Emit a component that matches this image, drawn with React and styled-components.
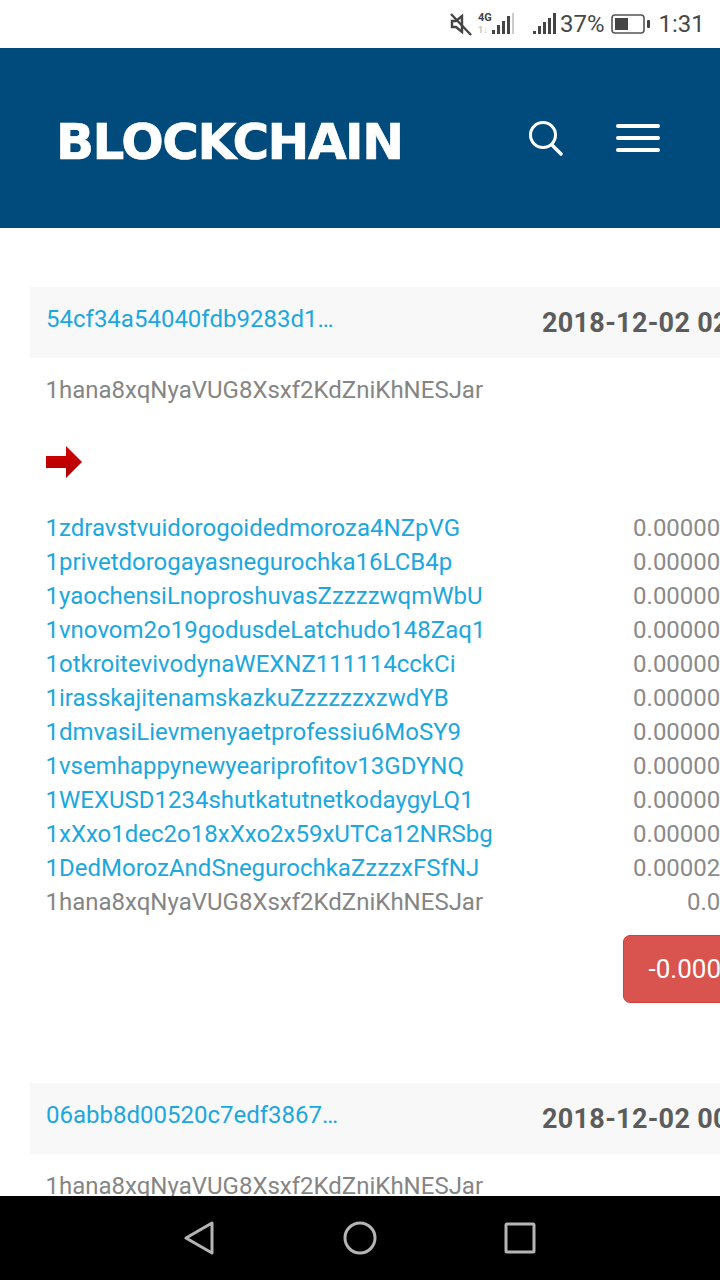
import React from "react";
import styled, { createGlobalStyle } from "styled-components";

const Global = createGlobalStyle`
  html, body { margin: 0; padding: 0; background: #fff; }
  * { box-sizing: border-box; }
`;

const Screen = styled.div`
  width: 720px; height: 1280px; display: flex; flex-direction: column; overflow: hidden;
  font-family: Roboto, "Liberation Sans", sans-serif; background: #fff;
`;
const StatusBar = styled.div`
  height: 48px; flex: none; display: flex; align-items: center;
  padding-left: 449px; color: #484848; font-size: 24px; background: #fff;
`;
const StatusText = styled.span`
  margin-left: ${p => p.$ml || 0}px; line-height: 46px;
`;
const StatusIcon = styled.svg`
  flex: none; margin-left: ${p => p.$ml || 0}px;
`;
const Header = styled.header`
  height: 180px; flex: none; background: #004a7c; display: flex; align-items: center;
  padding: 0 60px 0 56px;
`;
const Logo = styled.div`
  flex: 1; color: #fff; font-family: "DejaVu Sans", sans-serif; font-weight: 700; font-size: 50px;
  letter-spacing: -1.5px; line-height: 1; padding-top: 7px;
  -webkit-text-stroke: 0.7px #fff;
`;
const HeaderIcons = styled.div`
  display: flex; align-items: center; gap: 52px;
`;
const Main = styled.main`
  flex: 1; min-height: 0; overflow: hidden; padding: 59px 0 0 30px;
`;
const Tx = styled.section`
  width: 900px; margin-bottom: 80px;
`;
const TxHead = styled.div`
  height: 71px; background: #f8f8f8; display: flex; padding-left: 16px;
`;
const Hash = styled.a`
  width: 496px; color: #1ba7df; font-size: 24px; line-height: 64px; white-space: nowrap;
`;
const TxDate = styled.div`
  color: #5c5c5c; font-weight: 700; font-size: 27px; line-height: 72px; white-space: nowrap;
  font-family: Roboto, sans-serif; letter-spacing: 0.3px;
`;
const Sender = styled.div`
  font-size: 24px; line-height: 34px; padding: 15px 0 0 15.5px; color: #858585;
`;
const Arrow = styled.svg`
  display: block; margin: 39px 0 33px 16px;
`;
const Outputs = styled.div`
  display: grid; grid-template-columns: 1fr; padding-left: 15.5px;
`;
const Output = styled.div`
  display: flex; height: 34px; line-height: 34px; font-size: 24px; white-space: nowrap;
`;
const Address = styled.a`
  width: 585.5px; color: ${p => p.$self ? "#858585" : "#1ba7df"};
`;
const Amount = styled.div`
  width: 180px; text-align: right; color: #8a8a8a;
`;
const Total = styled.div`
  display: flex; margin-top: 16px; padding-left: 593px;
`;
const TotalBadge = styled.div`
  height: 68px; padding: 0 25px 0 24.5px; background: #d9534f; border: 1px solid #d43f3a; border-radius: 7px;
  color: #fff; font-size: 26px; line-height: 66px; white-space: nowrap;
`;
const NavBar = styled.nav`
  height: 84px; flex: none; background: #000; display: flex; align-items: center;
  padding: 0 184px 0 184px; justify-content: space-between;
`;

const outputs = [
  ["1zdravstvuidorogoidedmoroza4NZpVG", "0.00000546 BTC"],
  ["1privetdorogayasnegurochka16LCB4p", "0.00000546 BTC"],
  ["1yaochensiLnoproshuvasZzzzzwqmWbU", "0.00000546 BTC"],
  ["1vnovom2o19godusdeLatchudo148Zaq1", "0.00000546 BTC"],
  ["1otkroitevivodynaWEXNZ111114cckCi", "0.00000546 BTC"],
  ["1irasskajitenamskazkuZzzzzzxzwdYB", "0.00000546 BTC"],
  ["1dmvasiLievmenyaetprofessiu6MoSY9", "0.00000546 BTC"],
  ["1vsemhappynewyeariprofitov13GDYNQ", "0.00000546 BTC"],
  ["1WEXUSD1234shutkatutnetkodaygyLQ1", "0.00000546 BTC"],
  ["1xXxo1dec2o18xXxo2x59xUTCa12NRSbg", "0.00000546 BTC"],
  ["1DedMorozAndSnegurochkaZzzzxFSfNJ", "0.00002000 BTC"],
  ["1hana8xqNyaVUG8Xsxf2KdZniKhNESJar", "0.0002 BTC", true],
];

const SENDER = "1hana8xqNyaVUG8Xsxf2KdZniKhNESJar";

const Transaction = ({ hash, date }) => (
  <Tx>
    <TxHead>
      <Hash>{hash}</Hash>
      <TxDate>{date}</TxDate>
    </TxHead>
    <Sender>{SENDER}</Sender>
    <Arrow width="36" height="32" viewBox="0 0 36 32">
      <defs>
        <linearGradient id="arrowFill" x1="0" y1="0" x2="0" y2="1">
          <stop offset="0" stopColor="#d80000" />
          <stop offset="1" stopColor="#a80000" />
        </linearGradient>
      </defs>
      <path d="M0 10H20V0L36 16L20 32V22H0Z" fill="url(#arrowFill)" />
    </Arrow>
    <Outputs>
      {outputs.map(([a, v, self]) => (
        <Output key={a}>
          <Address $self={self}>{a}</Address>
          <Amount>{v}</Amount>
        </Output>
      ))}
    </Outputs>
    <Total><TotalBadge>-0.00024 BTC</TotalBadge></Total>
  </Tx>
);

export default function App() {
  return (
    <>
      <Global />
      <Screen>
        <StatusBar>
          <StatusIcon width="24" height="24" viewBox="0 0 24 24" fill="none" stroke="#444" strokeWidth="2.4">
            <path d="M3 9H7L13 4V20L7 15H3Z" />
            <path d="M2 2L22 23" />
          </StatusIcon>
          <StatusIcon $ml={5} width="36" height="26" viewBox="0 0 36 26">
            <text x="0" y="10" fontSize="11" fontWeight="700" fill="#444" fontFamily="Roboto, sans-serif">4G</text>
            <text x="0" y="22" fontSize="9" fontWeight="700" fill="#c4c4c4" fontFamily="Roboto, sans-serif">1↓</text>
            <rect x="14" y="19" width="3" height="4" fill="#444" />
            <rect x="19" y="14" width="3" height="9" fill="#444" />
            <rect x="24" y="10" width="3" height="13" fill="#444" />
            <rect x="29" y="5" width="3" height="18" fill="#444" />
            <rect x="34" y="2" width="2" height="21" fill="#ccc" />
          </StatusIcon>
          <StatusIcon $ml={19} width="24" height="26" viewBox="0 0 24 26" fill="#444">
            <rect x="0" y="20" width="3" height="3" />
            <rect x="5" y="15" width="3" height="8" />
            <rect x="10" y="11" width="3" height="12" />
            <rect x="15" y="7" width="3" height="16" />
            <rect x="20" y="2" width="3" height="21" />
          </StatusIcon>
          <StatusText $ml={3}>37%</StatusText>
          <StatusIcon $ml={6} width="40" height="22" viewBox="0 0 40 22" fill="none">
            <rect x="1" y="2" width="32" height="18" rx="3" stroke="#555" strokeWidth="1.6" />
            <rect x="4" y="5" width="13" height="12" fill="#444" />
            <rect x="36" y="7" width="3" height="8" rx="1" fill="#444" />
          </StatusIcon>
          <StatusText $ml={8}>1:31</StatusText>
        </StatusBar>
        <Header>
          <Logo>BLOCKCHAIN</Logo>
          <HeaderIcons>
            <svg width="36" height="36" viewBox="0 0 36 36" fill="none" stroke="#fff" strokeWidth="3" strokeLinecap="round">
              <circle cx="15" cy="15" r="12.5" />
              <path d="M24 25L33 34" strokeWidth="3.5" />
            </svg>
            <svg width="44" height="28" viewBox="0 0 44 28" fill="#fff">
              <rect x="0" y="0" width="44" height="4" rx="2" />
              <rect x="0" y="12" width="44" height="4" rx="2" />
              <rect x="0" y="24" width="44" height="4" rx="2" />
            </svg>
          </HeaderIcons>
        </Header>
        <Main>
          <Transaction hash="54cf34a54040fdb9283d1…" date="2018-12-02 02:10:44" />
          <Transaction hash="06abb8d00520c7edf3867…" date="2018-12-02 00:55:13" />
        </Main>
        <NavBar>
          <svg width="32" height="34" viewBox="0 0 32 34" fill="none" stroke="#b5b5b5" strokeWidth="3" strokeLinejoin="round">
            <path d="M28 2V32L2 17Z" />
          </svg>
          <svg width="34" height="34" viewBox="0 0 34 34" fill="none" stroke="#b5b5b5" strokeWidth="3">
            <circle cx="17" cy="17" r="15" />
          </svg>
          <svg width="32" height="32" viewBox="0 0 32 32" fill="none" stroke="#b5b5b5" strokeWidth="3" strokeLinejoin="round">
            <rect x="2" y="2" width="28" height="28" rx="1" />
          </svg>
        </NavBar>
      </Screen>
    </>
  );
}
